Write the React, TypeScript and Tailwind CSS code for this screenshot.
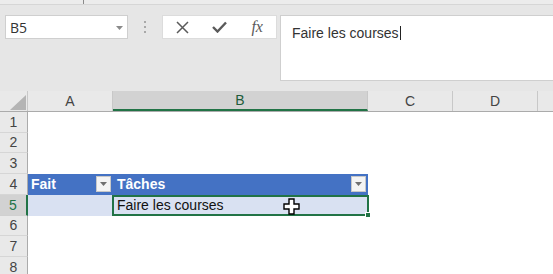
import React from "react";

const COLS = [
  { key: "A", w: 85, label: "A" },
  { key: "B", w: 255, label: "B" },
  { key: "C", w: 85, label: "C" },
  { key: "D", w: 85, label: "D" },
  { key: "E", w: 85, label: "" },
];

const ROW_H = [21, 20, 21, 21, 21, 20, 21, 21];

function FilterBtn() {
  return (
    <div className="absolute right-[2px] top-[2px] flex h-[16px] w-[15px] items-center justify-center border border-[#c8c8c8] bg-[#f4f4f4]">
      <svg width="7" height="4" viewBox="0 0 7 4">
        <path d="M0 0 H7 L3.5 4 Z" fill="#707070" />
      </svg>
    </div>
  );
}

function Cursor() {
  return (
    <svg
      className="absolute left-[169px] top-[1px]"
      width="17"
      height="17"
      viewBox="0 0 17 17"
    >
      <path
        d="M6 1 H11 V6 H16 V11 H11 V16 H6 V11 H1 V6 H6 Z"
        fill="#ffffff"
        stroke="#000000"
        strokeWidth="1.4"
      />
    </svg>
  );
}

export default function App() {
  return (
    <div
      className="relative h-[274px] w-[553px] overflow-hidden bg-[#e6e6e6]"
      style={{ fontFamily: '"Liberation Sans", Arial, sans-serif' }}
    >
      {/* top strip */}
      <div className="relative h-[5px] border-b border-[#d6d6d6] bg-[#ececec]">
        <div className="absolute left-[83px] top-0 h-[4px] w-px bg-[#8a8a8a]" />
      </div>

      {/* formula row */}
      <div className="flex h-[76px] items-start pl-[5px] pt-[10px]">
        <div className="relative flex h-[24px] w-[123px] shrink-0 items-center border border-[#cfcfcf] bg-white pl-[4px]">
          <span
            className="text-[14px] text-[#333]"
            style={{ fontFamily: '"Open Sans", "Noto Sans", sans-serif' }}
          >
            B5
          </span>
          <svg className="absolute left-[110px] top-[10px]" width="7" height="4" viewBox="0 0 7 4">
            <path d="M0 0 H7 L3.5 4 Z" fill="#8a8a8a" />
          </svg>
        </div>
        <div className="flex h-[24px] w-[34px] shrink-0 flex-col items-center justify-center gap-[3px]">
          <div className="h-[2px] w-[2px] bg-[#a8a8a8]" />
          <div className="h-[2px] w-[2px] bg-[#a8a8a8]" />
          <div className="h-[2px] w-[2px] bg-[#a8a8a8]" />
        </div>
        <div className="flex h-[24px] w-[115px] shrink-0 items-center border border-[#dcdcdc] bg-white">
          <div className="flex w-[38px] justify-center pl-[1px]">
            <svg width="13" height="13" viewBox="0 0 13 13">
              <path d="M1 1 L12 12 M12 1 L1 12" stroke="#5a5a5a" strokeWidth="1.5" />
            </svg>
          </div>
          <div className="flex w-[38px] justify-center">
            <svg width="15" height="12" viewBox="0 0 15 12">
              <path d="M1 6 L5.5 10.5 L14 1.5" stroke="#5a5a5a" strokeWidth="2.4" fill="none" />
            </svg>
          </div>
          <div className="flex w-[38px] justify-center">
            <span
              className="text-[16px] italic text-[#5a5a5a]"
              style={{ fontFamily: '"Liberation Serif", "Times New Roman", serif' }}
            >
              fx
            </span>
          </div>
        </div>
        <div className="ml-[3px] h-[66px] w-[290px] shrink-0 border border-[#cfcfcf] bg-white pl-[11px] pt-[5px]">
          <span className="text-[14px] text-[#333]">Faire les courses</span>
          <span className="ml-px inline-block h-[14px] w-px translate-y-[2px] bg-[#222]" />
        </div>
      </div>

      {/* column headers */}
      <div className="mt-[10px] flex h-[21px] border-b border-[#ababab] bg-[#e9e9e9]">
        <div className="relative w-[28px] shrink-0 border-r border-[#c8c8c8]">
          <svg className="absolute left-[10px] top-[4px]" width="16" height="15" viewBox="0 0 16 15">
            <path d="M16 0 V15 H0 Z" fill="#b4b4b4" />
          </svg>
        </div>
        {COLS.map((c) => {
          const sel = c.key === "B";
          return (
            <div
              key={c.key}
              className={
                sel
                  ? "flex shrink-0 items-center justify-center border-b-2 border-r border-b-[#217346] border-r-[#c8c8c8] bg-[#d2d2d2] text-[14px] text-[#1e5c3a]"
                  : "flex shrink-0 items-center justify-center border-r border-[#c8c8c8] text-[14px] text-[#444]"
              }
              style={{ width: c.w }}
            >
              {c.label}
            </div>
          );
        })}
      </div>

      {/* rows */}
      {ROW_H.map((h, i) => {
        const n = i + 1;
        const sel = n === 5;
        return (
          <div key={n} className="flex" style={{ height: h }}>
            <div
              className={
                sel
                  ? "flex w-[28px] shrink-0 items-center justify-center border-b border-r-2 border-b-[#d0d0d0] border-r-[#217346] bg-[#d2d2d2] text-[14px] text-[#217346]"
                  : "flex w-[28px] shrink-0 items-center justify-center border-b border-r border-b-[#d6d6d6] border-r-[#ababab] bg-[#e9e9e9] text-[14px] text-[#444]"
              }
            >
              {n}
            </div>
            {n === 4 && (
              <>
                <div className="relative flex w-[85px] shrink-0 items-center bg-[#4472c4] pl-[3px] text-[14px] font-bold text-white">
                  Fait
                  <FilterBtn />
                </div>
                <div className="relative flex w-[255px] shrink-0 items-center bg-[#4472c4] pl-[4px] text-[14px] font-bold text-white">
                  Tâches
                  <FilterBtn />
                </div>
                <div className="flex-1 bg-white" />
              </>
            )}
            {n === 5 && (
              <>
                <div className="w-[84px] shrink-0 bg-[#d9e1f2]" />
                <div className="relative flex w-[257px] shrink-0 items-center border-2 border-[#217346] bg-[#d9e1f2] pl-[3px] text-[14px] text-[#111]">
                  Faire les courses
                  <Cursor />
                  <div className="absolute -bottom-[4px] -right-[4px] h-[6px] w-[6px] border border-white bg-[#217346]" />
                </div>
                <div className="flex-1 bg-white" />
              </>
            )}
            {n !== 4 && n !== 5 && <div className="flex-1 bg-white" />}
          </div>
        );
      })}
    </div>
  );
}
